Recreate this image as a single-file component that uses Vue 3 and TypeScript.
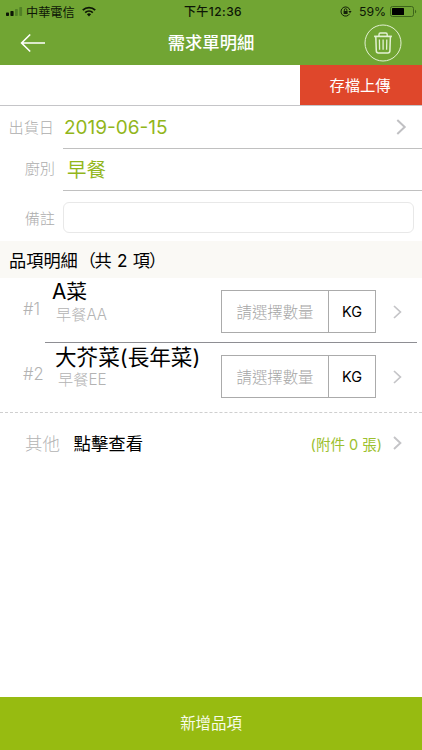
<script setup lang="ts">
interface Item {
  id: number
  name: string
  meal: string
  unit: string
}

const items: Item[] = [
  { id: 1, name: 'A菜', meal: '早餐AA', unit: 'KG' },
  { id: 2, name: '大芥菜(長年菜)', meal: '早餐EE', unit: 'KG' },
]
</script>

<template>
  <div class="screen">
    <header class="top">
      <div class="status">
        <div class="status-left">
          <svg class="signal" width="17" height="10" viewBox="0 0 17 10">
            <rect x="0" y="5.6" width="3" height="3.4" rx=".7" fill="#0d1606" />
            <rect x="4.4" y="4" width="3.2" height="5" rx=".7" fill="#0d1606" />
            <rect x="9" y="2" width="2.8" height="7" rx=".7" fill="#518026" />
            <rect x="13.3" y="0" width="2.8" height="9" rx=".7" fill="#518026" />
          </svg>
          <span class="carrier">中華電信</span>
          <svg class="wifi" width="14" height="11" viewBox="0 0 14 11" fill="none" stroke="#0d1606">
            <path d="M.8 4.1a9 9 0 0 1 12.4 0" stroke-width="1.9" />
            <path d="M3.2 6.6a5.6 5.6 0 0 1 7.6 0" stroke-width="1.8" />
            <path d="M7 10.4L4.9 8.3a3 3 0 0 1 4.2 0z" fill="#0d1606" stroke="none" />
          </svg>
        </div>
        <span class="clock">下午12:36</span>
        <div class="status-right">
          <svg width="12" height="11" viewBox="0 0 12 11" fill="none" stroke="#142009">
            <path d="M9.6 7.8A4.6 4.6 0 1 1 10 4.2" stroke-width="1" />
            <path d="M8.4 5.1h3.2L10 7.3z" fill="#142009" stroke="none" />
            <rect x="3.6" y="5" width="4" height="3" fill="#142009" stroke="none" />
            <path d="M4.3 5V4a1.3 1.3 0 0 1 2.6 0v1" stroke-width=".9" />
          </svg>
          <span class="percent">59%</span>
          <svg class="battery" width="27" height="11" viewBox="0 0 27 11">
            <rect x=".5" y=".5" width="23" height="10" rx="2" fill="none" stroke="#3d641a" />
            <rect x="2" y="2" width="12" height="7" rx=".6" fill="#000" />
            <path d="M25 3.7c1.6.4 1.6 3.2 0 3.6z" fill="#3d641a" />
          </svg>
        </div>
      </div>
      <nav class="nav">
        <button class="back" aria-label="返回">
          <svg width="26" height="20" viewBox="0 0 26 20" fill="none" stroke="#fff" stroke-width="1.6">
            <path d="M25 10H1.6M10.2 1.5L1.6 10l8.6 8.5" />
          </svg>
        </button>
        <h1>需求單明細</h1>
        <button class="trash" aria-label="刪除">
          <svg width="38" height="38" viewBox="0 0 38 38" fill="none" stroke="#e3f1d3">
            <circle cx="19" cy="19" r="18" stroke-width="1" />
            <path d="M10.1 12.4h17.8" stroke-width="1.7" />
            <path d="M15 12v-1.6q0-1.4 1.4-1.4h5.4q1.4 0 1.4 1.4V12" stroke-width="1.4" />
            <path d="M11.8 12.5l.5 14.4q.1 2 2 2h9.6q1.9 0 2-2l.5-14.4" stroke-width="1.5" />
            <path d="M15.4 15.4l.2 10.4M19.1 15.4v10.4M22.8 15.4l-.2 10.4" stroke-width="1.3" />
          </svg>
        </button>
      </nav>
    </header>

    <div class="actions"><button class="save">存檔上傳</button></div>

    <div class="row date-row">
      <label>出貨日</label>
      <div class="value date">
        <span>2019-06-15</span>
        <svg width="11" height="16" viewBox="0 0 11 16" fill="none" stroke="#c0c0c3" stroke-width="2">
          <path d="M1.3 1l7.4 7-7.4 7" />
        </svg>
      </div>
    </div>
    <div class="row kitchen-row">
      <label>廚別</label>
      <div class="value kitchen"><span>早餐</span></div>
    </div>
    <div class="row note-row">
      <label>備註</label>
      <input class="note" type="text" aria-label="備註" />
    </div>

    <h2>品項明細<span class="paren">（</span>共 2 項<span class="close">）</span></h2>

    <section v-for="item in items" :key="item.id" class="item">
      <span class="index">#{{ item.id }}</span>
      <div class="info">
        <div class="name">{{ item.name }}</div>
        <div class="meal">{{ item.meal }}</div>
      </div>
      <div class="quantity">
        <span class="placeholder">請選擇數量</span>
        <span class="unit">{{ item.unit }}</span>
      </div>
      <svg class="chevron" width="9" height="14" viewBox="0 0 9 14" fill="none" stroke="#c4c4c7" stroke-width="1.7">
        <path d="M1 1l6.4 6L1 13" />
      </svg>
    </section>

    <div class="other">
      <span class="other-label">其他</span>
      <span class="other-view">點擊查看</span>
      <span class="attachments">(附件 0 張)</span>
      <svg class="chevron" width="9" height="14" viewBox="0 0 9 14" fill="none" stroke="#c4c4c7" stroke-width="1.9">
        <path d="M1 1l6.4 6L1 13" />
      </svg>
    </div>

    <button class="add">新增品項</button>
  </div>
</template>

<style>
body {
  margin: 0;
  background: #fff;
}
</style>

<style scoped>
* {
  box-sizing: border-box;
}
.screen {
  width: 422px;
  height: 750px;
  display: flex;
  flex-direction: column;
  overflow: hidden;
  background: #fff;
  color: #000;
  font-family: Inter, "Noto Sans CJK TC", sans-serif;
  white-space: nowrap;
}
button {
  border: 0;
  padding: 0;
  background: none;
  font-family: inherit;
}
svg {
  display: block;
  flex: none;
}
.top {
  height: 65px;
  flex: none;
  background: #71a533;
}
.status {
  height: 21px;
  display: grid;
  grid-template-columns: 1fr auto 1fr;
  align-items: center;
  padding: 1px 6px 0;
  color: #0d1606;
  font-size: 12px;
  line-height: 20px;
}
.status-left,
.status-right {
  display: flex;
  align-items: center;
}
.carrier {
  margin: 0 7px 0 3px;
  padding-top: 1px;
  font-size: 12.2px;
  line-height: 19px;
}
.wifi {
  margin-top: -1px;
}
.clock {
  padding: 1px 0 0 4px;
  font-weight: 500;
  letter-spacing: 0.45px;
}
.status-right {
  justify-content: flex-end;
}
.percent {
  margin: 0 4px 0 7px;
  font-size: 12.3px;
  letter-spacing: -0.1px;
}
.battery {
  margin-right: -1px;
}
.nav {
  height: 44px;
  display: grid;
  grid-template-columns: 1fr auto 1fr;
  align-items: center;
  padding: 0 20px;
}
h1 {
  margin: 0;
  padding-bottom: 3px;
  color: #fff;
  font-size: 17.3px;
  font-weight: 500;
}
.trash {
  justify-self: end;
}
.actions {
  height: 41px;
  flex: none;
  display: flex;
  justify-content: flex-end;
  border-bottom: 1px solid #c5c5c8;
}
.save {
  width: 122px;
  height: 40px;
  padding: 0 2px 2px 0;
  background: #df472b;
  color: #fff;
  font-size: 15.3px;
}
.row {
  flex: none;
  display: flex;
}
label {
  width: 63px;
  flex: none;
  padding-right: 8px;
  text-align: right;
  color: #adadad;
  font-size: 15.2px;
  font-weight: 300;
}
.value {
  flex: 1;
  display: flex;
  border-bottom: 1px solid #c0c0c0;
  color: #92b61b;
}
.date-row {
  height: 43px;
  line-height: 43px;
}
.date-row label {
  padding-right: 9px;
}
.date {
  justify-content: space-between;
  align-items: center;
  padding: 0 15px 1px 1px;
  font-size: 19px;
}
.date span {
  padding-top: 3px;
  line-height: 38px;
}
.kitchen-row {
  height: 42px;
  line-height: 40px;
}
.kitchen {
  padding-left: 4px;
  font-size: 19.4px;
  line-height: 42px;
}
.note-row {
  height: 50px;
  padding: 11px 8px 8px 0;
  line-height: 33px;
}
.note {
  flex: 1;
  height: 31px;
  border: 1px solid #e8e8e8;
  border-radius: 6px;
  background: #fff;
}
h2 {
  height: 37px;
  flex: none;
  margin: 0;
  padding-left: 9px;
  background: #faf9f5;
  font-size: 17.2px;
  font-weight: 400;
  line-height: 40px;
  word-spacing: 0.5px;
}
.paren {
  display: inline-block;
  margin: 0 -1.5px 0 1px;
}
.close {
  display: inline-block;
  margin-left: -1px;
}
.item {
  height: 65px;
  flex: none;
  display: grid;
  grid-template-columns: 45px 176px 155px 1fr;
  position: relative;
}
.item + .item {
  height: 69px;
}
.item + .item::before {
  content: "";
  position: absolute;
  top: -1px;
  left: 45px;
  right: 5px;
  height: 1px;
  background: #8e8e93;
}
.index {
  padding: 17px 0 0 23px;
  color: #b3b3b3;
  font-size: 16.6px;
  font-weight: 300;
  line-height: 28px;
}
.info {
  padding: 1px 0 0 7px;
}
.item + .item .info {
  padding-left: 10px;
}
.name {
  height: 26px;
  font-size: 20.8px;
  line-height: 26px;
}
.item + .item .name {
  font-size: 21.6px;
}
.meal {
  padding-left: 4px;
  color: #b3b3b3;
  font-size: 15.2px;
  font-weight: 300;
  line-height: 20px;
}
.item + .item .meal {
  padding-left: 3px;
}
.quantity {
  height: 43px;
  margin-top: 12px;
  display: flex;
  border: 1px solid #ababab;
  font-size: 15.4px;
  line-height: 43px;
  text-align: center;
}
.placeholder {
  width: 107px;
  border-right: 1px solid #ababab;
  color: #a6a6a6;
  font-weight: 300;
}
.unit {
  flex: 1;
  font-size: 14.5px;
  line-height: 42px;
}
.item .chevron {
  margin: 27px 0 0 17px;
}
.other {
  height: 64px;
  flex: none;
  display: flex;
  align-items: center;
  padding: 0 20px 4px 25px;
  border-top: 1px dashed #cfcfcf;
  font-size: 17.4px;
}
.other-label {
  width: 48.5px;
  color: #b3b3b3;
  font-weight: 300;
}
.attachments {
  margin: 1px 11px 0 auto;
  color: #9cc02e;
  font-size: 14.5px;
}
.add {
  height: 53px;
  flex: none;
  margin-top: auto;
  padding-bottom: 3px;
  background: #97bb11;
  color: #f7fbe8;
  font-size: 15.4px;
}
</style>
